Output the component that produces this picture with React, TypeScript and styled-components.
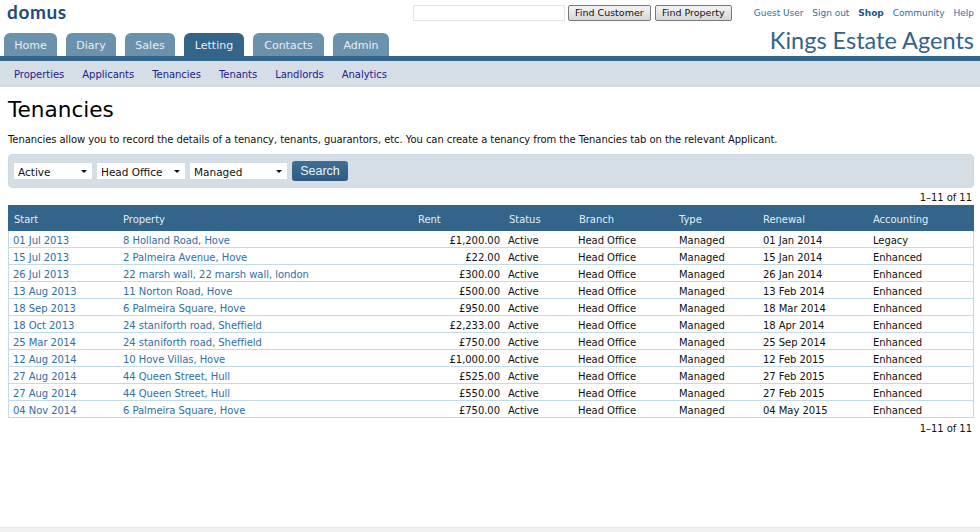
import { createGlobalStyle, styled } from "styled-components";

const GlobalStyle = createGlobalStyle`
  html, body {
    margin: 0;
    padding: 0;
    background: #fff;
    font-family: "DejaVu Sans", Verdana, sans-serif;
    font-size: 10px;
    letter-spacing: -0.05px;
    color: #111;
  }
`;

const tabs = [
  { label: "Home", width: 53 },
  { label: "Diary", width: 50 },
  { label: "Sales", width: 50 },
  { label: "Letting", width: 60, active: true },
  { label: "Contacts", width: 71 },
  { label: "Admin", width: 56 },
];

const subLinks = ["Properties", "Applicants", "Tenancies", "Tenants", "Landlords", "Analytics"];

const rows = [
  ["01 Jul 2013", "8 Holland Road, Hove", "£1,200.00", "01 Jan 2014", "Legacy"],
  ["15 Jul 2013", "2 Palmeira Avenue, Hove", "£22.00", "15 Jan 2014", "Enhanced"],
  ["26 Jul 2013", "22 marsh wall, 22 marsh wall, london", "£300.00", "26 Jan 2014", "Enhanced"],
  ["13 Aug 2013", "11 Norton Road, Hove", "£500.00", "13 Feb 2014", "Enhanced"],
  ["18 Sep 2013", "6 Palmeira Square, Hove", "£950.00", "18 Mar 2014", "Enhanced"],
  ["18 Oct 2013", "24 staniforth road, Sheffield", "£2,233.00", "18 Apr 2014", "Enhanced"],
  ["25 Mar 2014", "24 staniforth road, Sheffield", "£750.00", "25 Sep 2014", "Enhanced"],
  ["12 Aug 2014", "10 Hove Villas, Hove", "£1,000.00", "12 Feb 2015", "Enhanced"],
  ["27 Aug 2014", "44 Queen Street, Hull", "£525.00", "27 Feb 2015", "Enhanced"],
  ["27 Aug 2014", "44 Queen Street, Hull", "£550.00", "27 Feb 2015", "Enhanced"],
  ["04 Nov 2014", "6 Palmeira Square, Hove", "£750.00", "04 May 2015", "Enhanced"],
];

const columns = [110, 295, 90, 70, 101, 84, 110, 106];

export default function App() {
  return (
    <Page>
      <GlobalStyle />
      <Header>
        <TopRow>
          <Logo>domus</Logo>
          <TopRight>
            <SearchInput type="text" />
            <GreyButton $width={83}>Find Customer</GreyButton>
            <GreyButton $width={77}>Find Property</GreyButton>
            <UserLinks>
              <UserLink>Guest User</UserLink>
              <UserLink>Sign out</UserLink>
              <UserLink $bold>Shop</UserLink>
              <UserLink>Community</UserLink>
              <UserLink>Help</UserLink>
            </UserLinks>
          </TopRight>
        </TopRow>
        <TabRow>
          <Tabs>
            {tabs.map((t) => (
              <Tab key={t.label} $width={t.width} $active={t.active}>
                {t.label}
              </Tab>
            ))}
          </Tabs>
          <AgencyName>Kings Estate Agents</AgencyName>
        </TabRow>
      </Header>
      <SubNav>
        {subLinks.map((l) => (
          <SubLink key={l}>{l}</SubLink>
        ))}
      </SubNav>
      <Content>
        <Title>Tenancies</Title>
        <Intro>
          Tenancies allow you to record the details of a tenancy, tenants, guarantors, etc. You can create a tenancy
          from the Tenancies tab on the relevant Applicant.
        </Intro>
        <FilterPanel>
          <SelectWrap>
            <FilterSelect $width={78} defaultValue="Active">
              <option>Active</option>
            </FilterSelect>
          </SelectWrap>
          <SelectWrap>
            <FilterSelect $width={88} defaultValue="Head Office">
              <option>Head Office</option>
            </FilterSelect>
          </SelectWrap>
          <SelectWrap>
            <FilterSelect $width={97} defaultValue="Managed">
              <option>Managed</option>
            </FilterSelect>
          </SelectWrap>
          <SearchButton>Search</SearchButton>
        </FilterPanel>
        <Pager>1–11 of 11</Pager>
        <Table>
          <colgroup>
            {columns.map((w, i) => (
              <col key={i} width={w} />
            ))}
          </colgroup>
          <thead>
            <tr>
              <Th>Start</Th>
              <Th>Property</Th>
              <Th>Rent</Th>
              <Th $inset>Status</Th>
              <Th $inset>Branch</Th>
              <Th>Type</Th>
              <Th>Renewal</Th>
              <Th>Accounting</Th>
            </tr>
          </thead>
          <tbody>
            {rows.map((r, i) => (
              <tr key={i}>
                <Td><RowLink>{r[0]}</RowLink></Td>
                <Td><RowLink>{r[1]}</RowLink></Td>
                <MoneyTd>{r[2]}</MoneyTd>
                <Td>Active</Td>
                <Td>Head Office</Td>
                <Td>Managed</Td>
                <Td>{r[3]}</Td>
                <Td>{r[4]}</Td>
              </tr>
            ))}
          </tbody>
        </Table>
        <Pager $below>1–11 of 11</Pager>
      </Content>
      <FooterStrip />
    </Page>
  );
}

const Page = styled.div`
  position: relative;
  width: 980px;
  height: 532px;
  overflow: hidden;
`;

const Header = styled.div`
  height: 61px;
  box-sizing: border-box;
  border-bottom: 5px solid #336489;
`;

const TopRow = styled.div`
  display: flex;
  justify-content: space-between;
  height: 33px;
  padding: 0 6px 0 7px;
  box-sizing: border-box;
`;

const Logo = styled.div`
  font-family: "Lato", "Open Sans", sans-serif;
  font-size: 19px;
  font-weight: 700;
  letter-spacing: 0.6px;
  line-height: 24px;
  color: #23497c;
`;

const TopRight = styled.div`
  display: flex;
  align-items: flex-start;
  padding-top: 5px;
`;

const SearchInput = styled.input`
  width: 152px;
  height: 16px;
  padding: 0;
  margin-right: 3px;
  box-sizing: border-box;
  border: 1px solid #dfe5ea;
  outline: none;
`;

const GreyButton = styled.button<{ $width: number }>`
  width: ${(p) => p.$width}px;
  height: 16px;
  padding: 0;
  margin-right: 4px;
  box-sizing: border-box;
  border: 1px solid #777;
  border-radius: 2px;
  background: linear-gradient(#f4f4f4, #d6d6d6);
  font-family: inherit;
  font-size: 9.5px;
  line-height: 14px;
  color: #111;
`;

const UserLinks = styled.div`
  display: flex;
  gap: 9px;
  margin-left: 18px;
  line-height: 16px;
  letter-spacing: -0.03px;
`;

const UserLink = styled.span<{ $bold?: boolean }>`
  font-size: 9px;
  color: ${(p) => (p.$bold ? "#23568c" : "#2f6ea8")};
  font-weight: ${(p) => (p.$bold ? 700 : 400)};
`;

const TabRow = styled.div`
  display: flex;
  justify-content: space-between;
  align-items: flex-end;
  height: 23px;
  padding: 0 6px 0 4px;
`;

const Tabs = styled.div`
  display: flex;
  gap: 9px;
`;

const Tab = styled.div<{ $width: number; $active?: boolean }>`
  width: ${(p) => p.$width}px;
  height: 23px;
  border-radius: 6px 6px 0 0;
  background: ${(p) => (p.$active ? "#336489" : "#6b92ac")};
  color: #e8eef3;
  font-size: 11px;
  letter-spacing: 0;
  line-height: 25px;
  text-align: center;
`;

const AgencyName = styled.div`
  font-family: "Lato", "Open Sans", sans-serif;
  font-size: 23.5px;
  letter-spacing: 0;
  line-height: 24px;
  color: #336489;
  height: 28px;
`;

const SubNav = styled.div`
  display: flex;
  gap: 18px;
  align-items: center;
  height: 26px;
  padding: 1px 0 0 14px;
  box-sizing: border-box;
  background: #d6dee5;
  border-bottom: 1px solid #c9dbe6;
`;

const SubLink = styled.span`
  font-size: 10px;
  letter-spacing: -0.03px;
  color: #1c2090;
`;

const Content = styled.div`
  padding: 0 6px 0 8px;
`;

const Title = styled.h1`
  margin: 0;
  padding-top: 9px;
  font-size: 21.6px;
  font-weight: 400;
  letter-spacing: 0;
  line-height: 28px;
  color: #000;
`;

const Intro = styled.p`
  margin: 8px 0 0;
  font-size: 10px;
  letter-spacing: -0.07px;
  line-height: 16px;
  color: #111;
`;

const FilterPanel = styled.div`
  display: flex;
  align-items: center;
  gap: 5px;
  height: 34px;
  margin-top: 6px;
  padding-left: 5px;
  box-sizing: border-box;
  background: #d6dee5;
  border: 1px solid #c9dbe6;
  border-radius: 4px;
`;

const SelectWrap = styled.div`
  position: relative;
  display: flex;

  &::after {
    content: "";
    position: absolute;
    right: 5px;
    top: 7px;
    border-style: solid;
    border-width: 3px 3px 0;
    border-color: #111 transparent transparent;
    pointer-events: none;
  }
`;

const FilterSelect = styled.select<{ $width: number }>`
  appearance: none;
  width: ${(p) => p.$width}px;
  height: 16px;
  padding: 1px 0 0 4px;
  border: 0;
  border-radius: 0;
  background: #fff;
  font-family: inherit;
  font-size: 10.5px;
  letter-spacing: 0;
  color: #111;
`;

const SearchButton = styled.button`
  width: 56px;
  height: 20px;
  padding: 0;
  border: 0;
  border-radius: 3px;
  background: linear-gradient(#3f7097, #2d5b80);
  font-family: "Liberation Sans", Arial, sans-serif;
  font-size: 12.5px;
  letter-spacing: 0;
  color: #eef3f7;
`;

const Pager = styled.div<{ $below?: boolean }>`
  height: 17px;
  margin-top: ${(p) => (p.$below ? "1px" : "0")};
  padding-right: 2px;
  font-size: 10px;
  line-height: 20px;
  text-align: right;
  color: #111;
`;

const Table = styled.table`
  width: 966px;
  table-layout: fixed;
  border-collapse: separate;
  border-spacing: 0;
`;

const Th = styled.th<{ $inset?: boolean }>`
  height: 24px;
  padding: 2px 0 0 ${(p) => (p.$inset ? "6px" : "5px")};
  background: #336489;
  color: #e4ecf2;
  font-size: 10px;
  font-weight: 400;
  text-align: left;

  &:first-child {
    padding-left: 6px;
  }
`;

const Td = styled.td`
  height: 13px;
  padding: 3px 0 0 5px;
  border-bottom: 1px solid #c3dbe9;
  font-size: 10px;
  line-height: 13px;
  color: #111;

  &:first-child {
    padding-left: 4px;
    border-left: 1px solid #c3dbe9;
  }

  &:last-child {
    border-right: 1px solid #c3dbe9;
  }
`;

const MoneyTd = styled(Td)`
  padding: 3px 3px 0 0;
  text-align: right;
`;

const RowLink = styled.span`
  color: #2f6ea8;
`;

const FooterStrip = styled.div`
  position: absolute;
  left: 0;
  right: 0;
  bottom: 0;
  height: 4px;
  background: #f0f0f0;
  border-top: 1px solid #e6e6e6;
`;
